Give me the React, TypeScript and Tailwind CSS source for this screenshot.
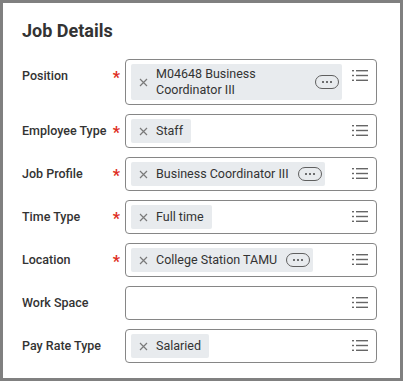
import React from "react";

const ListIcon = () => (
  <svg width="16" height="13" viewBox="0 0 16 13" className="shrink-0">
    <g fill="#666">
      <rect x="0" y="1" width="2" height="1.4" />
      <rect x="4" y="1" width="12" height="1.4" />
      <rect x="0" y="5.8" width="2" height="1.4" />
      <rect x="4" y="5.8" width="12" height="1.4" />
      <rect x="0" y="10.6" width="2" height="1.4" />
      <rect x="4" y="10.6" width="12" height="1.4" />
    </g>
  </svg>
);

const XIcon = () => (
  <svg width="9" height="9" viewBox="0 0 9 9" className="shrink-0">
    <path d="M1 1 L8 8 M8 1 L1 8" stroke="#7a7a7a" strokeWidth="1.2" fill="none" />
  </svg>
);

const MorePill = () => (
  <span className="shrink-0 flex items-center justify-center w-[24px] h-[14px] rounded-full border border-[#5f5f5f] gap-[2px]">
    <span className="w-[2px] h-[2px] rounded-full bg-[#444]" />
    <span className="w-[2px] h-[2px] rounded-full bg-[#444]" />
    <span className="w-[2px] h-[2px] rounded-full bg-[#444]" />
  </span>
);

const Chip = ({ text, more, wide }: { text: string; more?: boolean; wide?: boolean }) => (
  <div
    className={`flex items-center min-h-[24px] py-[2px] pl-[8px] pr-[3px] bg-[#e8ebee] rounded-[2px] ${
      wide ? "w-[211px]" : ""
    }`}
  >
    <span className="w-[17px] shrink-0 flex items-center">
      <XIcon />
    </span>
    <span className={`text-[12.5px] leading-[16px] text-[#333] ${wide ? "flex-1" : ""}`}>{text}</span>
    {more ? (
      <span className="ml-[9px] flex items-center">
        <MorePill />
      </span>
    ) : (
      <span className="w-[5px]" />
    )}
  </div>
);

const Row = ({
  label,
  required,
  children,
  tall,
}: {
  label: string;
  required?: boolean;
  children?: React.ReactNode;
  tall?: boolean;
}) => (
  <div className="flex items-start">
    <div className="w-[103px] shrink-0 flex items-center justify-between pr-[5px] h-[34px]">
      <span className="text-[12.5px] font-medium text-[#333] leading-[16px]">{label}</span>
      {required && <span className="text-[#de2d22] text-[16px] font-bold leading-[16px] mt-[3px]">*</span>}
    </div>
    <div
      className={`flex-1 flex items-start justify-between border border-[#868686] rounded-[4px] pl-[5px] pr-[8px] py-[4px] ${
        tall ? "h-[46px]" : "h-[34px]"
      }`}
    >
      <div className="flex">{children}</div>
      <div className="pt-[5px]">
        <ListIcon />
      </div>
    </div>
  </div>
);

export default function App() {
  return (
    <div
      className="w-[403px] h-[381px] border-[3px] border-[#808080] bg-white pl-[19px] pr-[23px] pt-[16px]"
      style={{ fontFamily: "Roboto, 'Liberation Sans', sans-serif" }}
    >
      <h1 className="text-[18px] font-bold text-[#333] leading-[24px]">Job Details</h1>
      <div className="mt-[16px] flex flex-col gap-[9px]">
        <Row label="Position" required tall>
          <Chip text="M04648 Business Coordinator III" more wide />
        </Row>
        <Row label="Employee Type" required>
          <Chip text="Staff" />
        </Row>
        <Row label="Job Profile" required>
          <Chip text="Business Coordinator III" more />
        </Row>
        <Row label="Time Type" required>
          <Chip text="Full time" />
        </Row>
        <Row label="Location" required>
          <Chip text="College Station TAMU" more />
        </Row>
        <Row label="Work Space" />
        <Row label="Pay Rate Type">
          <Chip text="Salaried" />
        </Row>
      </div>
    </div>
  );
}
